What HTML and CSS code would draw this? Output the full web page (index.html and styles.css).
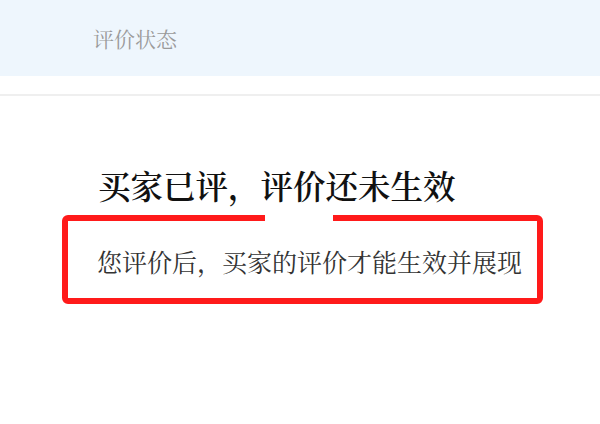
FILE: index.html
```html
<!DOCTYPE html>
<html lang="zh-CN">
<head>
  <meta charset="UTF-8">
  <meta name="viewport" content="width=device-width, initial-scale=1.0">
  <title>评价状态</title>
  <link rel="stylesheet" href="styles.css">
</head>
<body>
  <header class="top-bar">
    <span class="top-title">评价状态</span>
  </header>
  <div class="divider"></div>

  <main class="status">
    <h1 class="status-title">买家已评，评价还未生效</h1>
    <div class="status-box">
      <span class="status-mask"></span>
      <p class="status-text">您评价后，买家的评价才能生效并展现</p>
    </div>
  </main>
</body>
</html>
```

FILE: styles.css
```css
/* 基础设置 */
body {
  margin: 0;
  padding: 0;
  background: #ffffff;
  font-family: "Noto Serif CJK SC", "Liberation Serif", "Noto Sans CJK SC", serif;
  color: #222;
}

.top-bar {
  height: 76px;
  background: #eef6fd;
  display: flex;
  align-items: center;
  padding-left: 93px;
}

.top-title {
  font-size: 21px;
  color: #9a9a9a;
}

.divider {
  margin-top: 18px;
  height: 2px;
  background: #efefef;
}

.status {
  padding: 69px 0 0 62px;
}

.status-title {
  margin: 0 0 10px 36px;
  font-size: 32.5px;
  line-height: 40px;
  font-weight: 600;
  color: #111;
}

.status-box {
  position: relative;
  width: 440px;
  height: 77px;
  border: 6px solid #ff1a1a;
  border-radius: 6px;
  display: flex;
  align-items: center;
  padding-left: 29px;
  box-sizing: content-box;
}

/* 红框上方被遮住的一小块 */
.status-mask {
  position: absolute;
  top: -8px;
  left: 197px;
  width: 68px;
  height: 10px;
  background: #ffffff;
}

.status-text {
  margin: 2px 0 0 0;
  font-size: 25px;
  white-space: nowrap;
  color: #333;
}
```
